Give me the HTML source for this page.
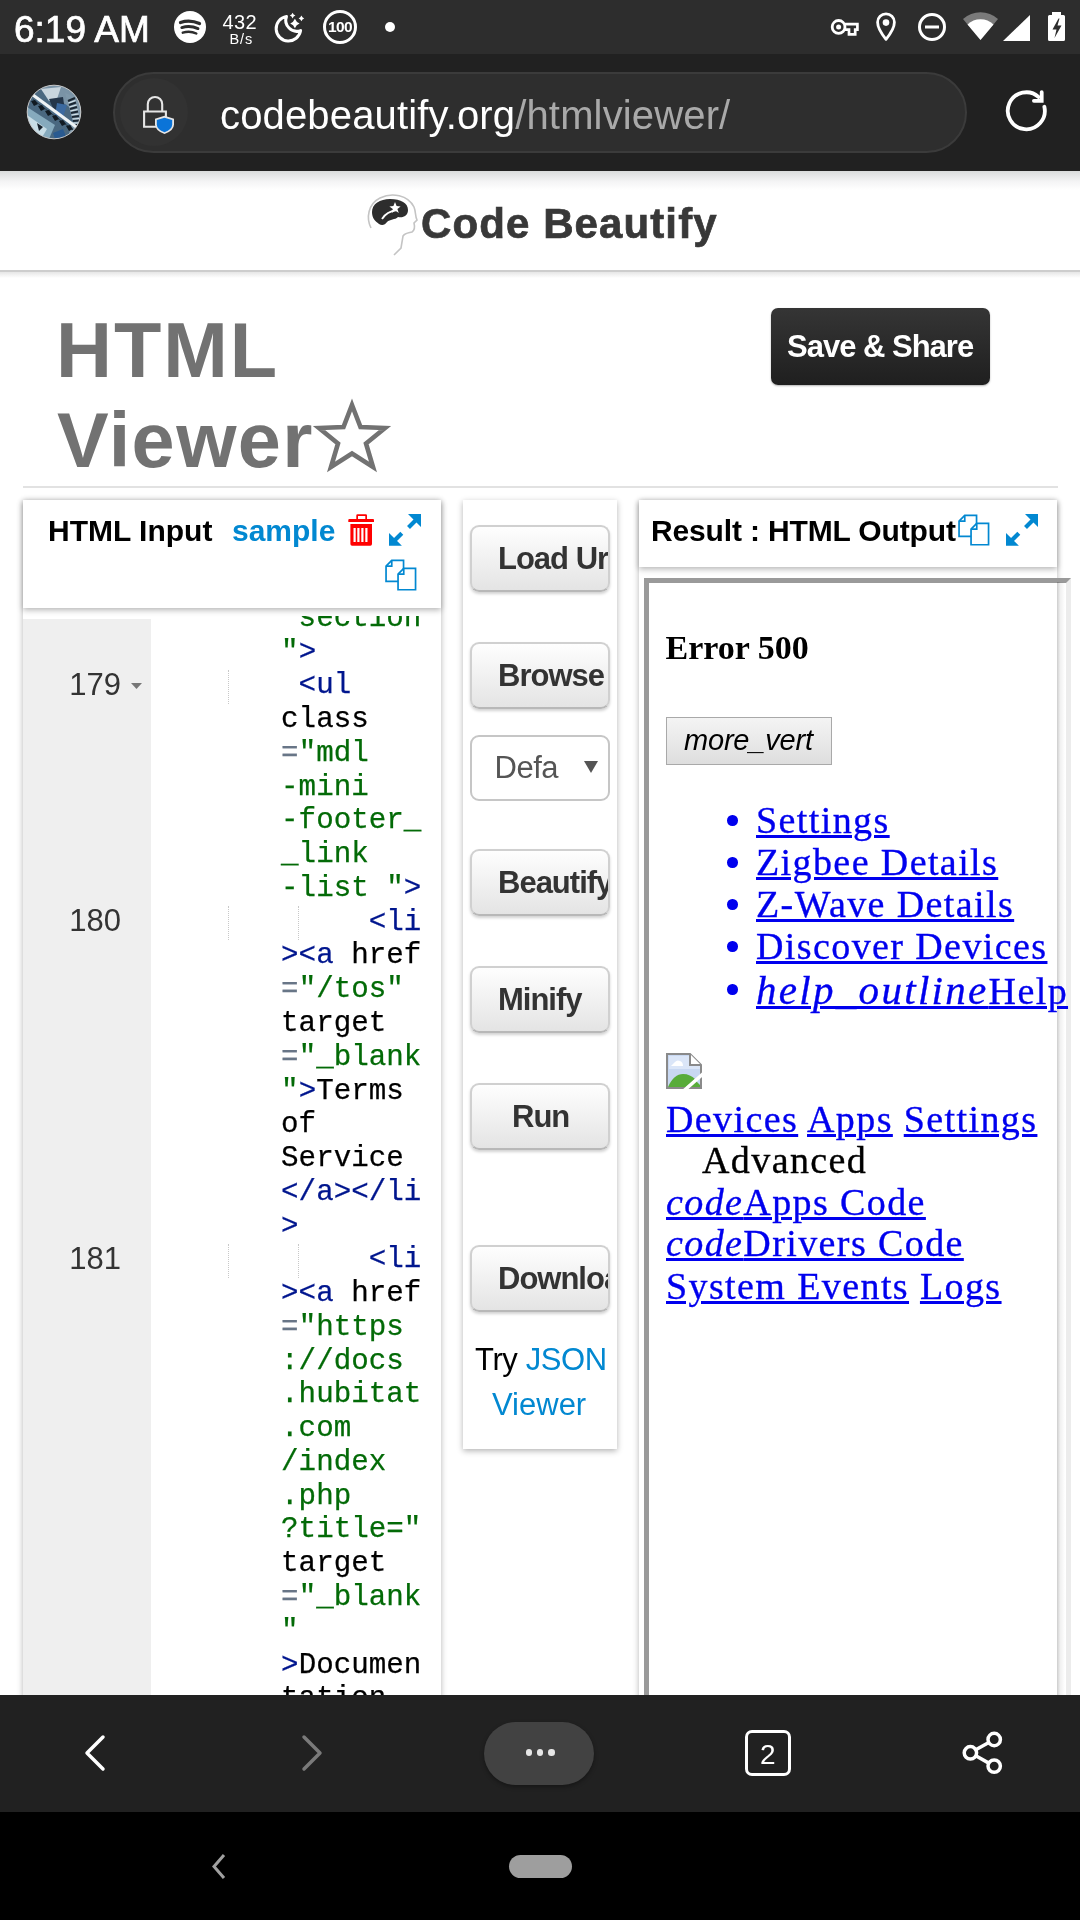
<!DOCTYPE html>
<html><head><meta charset="utf-8">
<style>
*{margin:0;padding:0;box-sizing:border-box}
html,body{width:1080px;height:1920px;overflow:hidden;background:#fff;font-family:"Liberation Sans",sans-serif}
body{position:relative}
.lay{position:absolute;left:0;top:0;width:1080px;height:1920px;will-change:transform}
.a{position:absolute}
.t{position:absolute;white-space:nowrap;line-height:1}
svg{position:absolute;overflow:visible}
.btn{position:absolute;left:469.5px;width:140px;height:67px;border:2px solid #d0d0d0;border-bottom-color:#b8b8b8;border-radius:9px;background:linear-gradient(#fefefe,#e4e4e4);box-shadow:0 2px 3px rgba(0,0,0,.18);overflow:hidden}
.btn span{position:absolute;left:26.5px;top:16.5px;font-weight:bold;font-size:31px;color:#333;white-space:nowrap;line-height:1;letter-spacing:-1px}
#code{position:absolute;left:158.5px;top:602.7px;font-family:"Liberation Mono",monospace;font-size:29.2px;line-height:33.76px;white-space:pre;color:#000;-webkit-text-stroke:0.25px currentColor}
.g{color:#036a07}.b{color:#00168e}.o{color:#687687}
.ln{position:absolute;font-size:31px;color:#333;line-height:1;text-align:right;width:60px;left:61px}
.guide{position:absolute;width:0;border-left:1px dotted #c8c8c8;height:34px}
.ifr{font-family:"Liberation Serif",serif;font-size:38px;letter-spacing:1.4px;color:#0000ee;-webkit-text-stroke:0.35px currentColor;white-space:nowrap;position:absolute;line-height:1}
.ifr u{text-decoration:underline;text-decoration-thickness:3px;text-underline-offset:2px}
.bul{position:absolute;left:727px;width:10.5px;height:10.5px;border-radius:50%;background:#0000ee}
</style></head><body><div class="lay">
<!-- ============ status bar ============ -->
<div class="a" style="left:0;top:0;width:1080px;height:54px;background:#2d2d2d"></div>
<div class="t" style="left:14px;top:11px;font-size:37px;color:#fff;-webkit-text-stroke:0.7px #fff">6:19 AM</div>
<svg style="left:174px;top:11px" width="32" height="32" viewBox="0 0 32 32">
  <circle cx="16" cy="16" r="16" fill="#fff"/>
  <path d="M6.5 11.5 Q16 8.3 25.5 12.6" stroke="#2d2d2d" stroke-width="3.3" fill="none" stroke-linecap="round"/>
  <path d="M7.8 16.6 Q16 14 24 17.6" stroke="#2d2d2d" stroke-width="2.9" fill="none" stroke-linecap="round"/>
  <path d="M8.8 21.6 Q16 19.3 22.3 22.5" stroke="#2d2d2d" stroke-width="2.5" fill="none" stroke-linecap="round"/>
</svg>
<div class="t" style="left:222.5px;top:11.5px;font-size:20px;color:#fff;letter-spacing:0.4px">432</div>
<div class="t" style="left:229.5px;top:31.5px;font-size:14.5px;color:#fff;letter-spacing:0.9px">B/s</div>
<svg style="left:268px;top:6px" width="44" height="42" viewBox="0 0 44 42">
  <path d="M18.5 10.5 A12.3 12.3 0 1 0 32.6 24.6 A11 11 0 0 1 18.5 10.5z" fill="none" stroke="#fff" stroke-width="3" stroke-linejoin="round"/>
  <path d="M26.9 12.8 Q28.215999999999998 16.184 31.599999999999998 17.5 Q28.215999999999998 18.816 26.9 22.2 Q25.584 18.816 22.2 17.5 Q25.584 16.184 26.9 12.8z M24.6 6.8 Q25.384 8.815999999999999 27.400000000000002 9.6 Q25.384 10.384 24.6 12.399999999999999 Q23.816000000000003 10.384 21.8 9.6 Q23.816000000000003 8.815999999999999 24.6 6.8z M33.4 9.600000000000001 Q34.184 11.616 36.199999999999996 12.4 Q34.184 13.184000000000001 33.4 15.2 Q32.616 13.184000000000001 30.599999999999998 12.4 Q32.616 11.616 33.4 9.600000000000001z" fill="#fff"/>
</svg>
<svg style="left:323px;top:10px" width="34" height="34" viewBox="0 0 34 34">
  <circle cx="17" cy="17" r="15.5" fill="none" stroke="#fff" stroke-width="3"/>
  <text x="17" y="22" font-family="Liberation Sans" font-weight="bold" font-size="15.5" fill="#fff" text-anchor="middle" letter-spacing="-0.6">100</text>
</svg>
<div class="a" style="left:385px;top:22px;width:10px;height:10px;border-radius:50%;background:#fff"></div>
<!-- right icons -->

<svg style="left:824px;top:8px" width="80" height="40" viewBox="0 0 80 40">
  <circle cx="14.6" cy="18.9" r="6.4" fill="none" stroke="#fff" stroke-width="2.8"/>
  <circle cx="14.6" cy="18.9" r="2.5" fill="#fff"/>
  <path d="M20.6 16.2 H33.4 V21.6 H31.2 V26.4 H25 V21.6 H20.6" fill="none" stroke="#fff" stroke-width="2.7"/>
  <path d="M62 31.3 C56 24 53.6 19.5 53.6 14.3 A8.4 8.4 0 0 1 70.4 14.3 C70.4 19.5 68 24 62 31.3z" fill="none" stroke="#fff" stroke-width="2.8" stroke-linejoin="round"/>
  <circle cx="62" cy="14.6" r="3.3" fill="#fff"/>
</svg>
<svg style="left:917px;top:13px" width="30" height="28" viewBox="0 0 30 28">
  <circle cx="15" cy="14" r="12.5" fill="none" stroke="#fff" stroke-width="3"/>
  <rect x="8" y="12.5" width="14" height="3" fill="#fff"/>
</svg>
<svg style="left:963px;top:13px" width="35" height="27" viewBox="0 0 35 27">
  <path d="M0 6 A26 26 0 0 1 35 6 L17.5 27z" fill="#7a7a7a"/>
  <path d="M4.5 11.5 A19 19 0 0 1 30.5 11.5 L17.5 27z" fill="#fff"/>
</svg>
<svg style="left:1003px;top:15px" width="27" height="26" viewBox="0 0 27 26">
  <path d="M27 0 V26 H0z" fill="#fff"/>
</svg>
<svg style="left:1048px;top:12px" width="17" height="29" viewBox="0 0 17 29">
  <path d="M4 0 H13 V3 H15.5 Q17 3 17 4.5 V27.5 Q17 29 15.5 29 H1.5 Q0 29 0 27.5 V4.5 Q0 3 1.5 3 H4z" fill="#fff"/>
  <path d="M10.5 6.5 L4.5 17.5 H8.5 L6.5 26 L13.5 13.5 H9.5 L11.5 6.5z" fill="#2d2d2d"/>
</svg>

<!-- ============ toolbar ============ -->
<div class="a" style="left:0;top:54px;width:1080px;height:117px;background:#212121"></div>
<svg style="left:27px;top:85px" width="54" height="54" viewBox="0 0 54 54">
  <defs><clipPath id="av"><circle cx="27" cy="27" r="26.8"/></clipPath></defs>
  <g clip-path="url(#av)">
    <rect width="54" height="54" fill="#4a6880"/>
    <path d="M0 0 H54 V30 L10 0z" fill="#7a93a6"/>
    <path d="M14 4 L34 2 L30 14 L22 16z" fill="#c9d6de"/>
    <path d="M22 14 L36 12 L38 26 L28 28z" fill="#24364a"/>
    <path d="M30 18 L40 20 L36 32 L28 30z" fill="#3c6aa0"/>
    <path d="M0 22 L28 40 L22 54 H0z" fill="#86aabd"/>
    <path d="M0 30 L20 44 L14 54 H0z" fill="#c8dde6"/>
    <path d="M38 8 L54 14 V54 H40 L46 36z" fill="#7f98aa"/>
    <g stroke="#1b2733" stroke-width="2.2">
      <path d="M41 16 L48 13 M42 20 L49 17.5 M43 24 L50 22 M44 28 L51 26.5 M45 32 L52 31 M46 36 L53 35.5 M47 40 L54 40"/>
    </g>
    <g stroke="#d8e6ec" stroke-width="1.2">
      <path d="M41.5 18 L48.5 15.5 M42.5 22 L49.5 20 M43.5 26 L50.5 24.5 M44.5 30 L51.5 29 M45.5 34 L52.5 33.5 M46.5 38 L53.5 38"/>
    </g>
    <path d="M6 10 L52 44" stroke="#eef3f5" stroke-width="3.2"/>
    <path d="M6 14.5 L50 48" stroke="#2a3a48" stroke-width="1"/>
    <g fill="#111a22">
      <path d="M4 16 l4 -1 3 4 -4 2z M11 21 l4 -1 3 4 -4 2z M18 26 l4 -1 3 4 -4 2z M25 31 l4 -1 3 4 -4 2z M32 36 l4 -1 3 4 -4 2z M39 41 l4 -1 3 4 -4 2z"/>
    </g>
    <path d="M26 48 L36 44 L40 54 H28z" fill="#2a5a90"/>
    <path d="M10 38 L16 42 L12 46z" fill="#18222c"/>
  </g>
  <circle cx="27" cy="27" r="26.8" fill="none" stroke="#c8c8c8" stroke-width="1"/>
</svg>
<div class="a" style="left:113px;top:72px;width:854px;height:81px;border-radius:41px;background:#2e2e2e;border:2px solid #3b3b3b"></div>
<div class="a" style="left:120px;top:78px;width:68px;height:68px;border-radius:50%;background:#323232"></div>
<svg style="left:143px;top:96px" width="32" height="38" viewBox="0 0 32 38">
  <path d="M4.8 15 V8.2 A7.2 7.2 0 0 1 19.2 8.2 V15" fill="none" stroke="#e6e6e6" stroke-width="2.1"/>
  <path d="M1.1 15.5 H22.9 V30.7 H1.1z" fill="none" stroke="#e6e6e6" stroke-width="2.1"/>
  <path d="M21.5 19.8 L31 22.8 V28.3 Q31 34.8 21.5 38 Q12 34.8 12 28.3 V22.8z" fill="#e6e6e6"/>
  <path d="M21.5 21.7 L29.2 24.1 V28.3 Q29.2 33.5 21.5 36.2 Q13.8 33.5 13.8 28.3 V24.1z" fill="#0b74d8"/>
</svg>
<div class="t" style="left:220px;top:95px;font-size:40px;color:#fff;letter-spacing:0.15px">codebeautify.org<span style="color:#a9a9a9">/htmlviewer/</span></div>
<svg style="left:1004px;top:89px" width="44" height="44" viewBox="0 0 44 44">
  <path d="M40.36 17.77 A18.5 18.5 0 1 1 34.68 8.05" fill="none" stroke="#fff" stroke-width="3.8" stroke-linecap="round"/>
  <path d="M37.7 3.2 V11.8 H29.9" fill="none" stroke="#fff" stroke-width="3.8" stroke-linecap="round" stroke-linejoin="miter"/>
</svg>

<!-- ============ page header ============ -->
<div class="a" style="left:0;top:171px;width:1080px;height:19px;background:linear-gradient(#dadcdc,#f4f4f5 55%,#fff)"></div>
<div class="a" style="left:0;top:270px;width:1080px;height:2px;background:#cdcdcd"></div>
<div class="a" style="left:0;top:272px;width:1080px;height:6px;background:linear-gradient(#e6e6e6,#fff)"></div>
<svg style="left:366px;top:192px" width="56" height="66" viewBox="0 0 56 66">
  <path d="M5 36 C0 26 2 12 14 6 C26 0 42 3 48 15 C50 20 49 24 51 28 L48 31 C49 35 49 38 46 40 C42 41 39 41 37 44 L35 56 L28 63" fill="none" stroke="#c4c4c4" stroke-width="1.6"/>
  <path d="M6 20 C6 12 14 7 24 7 C35 7 42 11 42 18 C42 24 37 26 32 25 C29 28 24 27 21 30 C19 33 16 34 13 32 C9 29 6 26 6 20z" fill="#2d2d2d"/>
  <path d="M16 27 C19 22 24 19 31 18" stroke="#fff" stroke-width="1.8" fill="none"/>
  <path d="M29 10 l1.6 4 4 0.6 -3.2 2.4 1.4 4 -3.6 -2.4 -3.4 2.4 1 -4 -3.4 -2.4 4 -0.6z" fill="#fff"/>
</svg>
<div class="t" style="left:421px;top:203px;font-size:42px;font-weight:bold;color:#383838;letter-spacing:1.1px;-webkit-text-stroke:0.7px #383838">Code Beautify</div>

<div class="t" style="left:56px;top:312px;font-size:77.5px;font-weight:bold;color:#727272;letter-spacing:2px">HTML</div>
<div class="t" style="left:57px;top:402px;font-size:77.5px;font-weight:bold;color:#727272;letter-spacing:1.4px">Viewer</div>
<svg style="left:314px;top:399px" width="76" height="74" viewBox="0 0 76 74">
  <path d="M38 6 L46.5 28 L71 29 L52 44.5 L59 68 L38 54.5 L17 68 L24 44.5 L5 29 L29.5 28z" fill="none" stroke="#727272" stroke-width="4.6" stroke-linejoin="miter" stroke-miterlimit="3"/>
</svg>

<div class="a" style="left:771px;top:308px;width:219px;height:77px;border-radius:7px;background:linear-gradient(#353535,#1f1f1f);box-shadow:0 1px 2px rgba(0,0,0,.3)"></div>
<div class="t" style="left:787px;top:331px;font-size:31px;font-weight:bold;color:#fff;letter-spacing:-1px">Save &amp; Share</div>

<div class="a" style="left:23px;top:486px;width:1035px;height:2px;background:#e2e2e2"></div>

<!-- ============ left panel ============ -->
<div class="a" style="left:23px;top:500px;width:418px;height:1300px;box-shadow:0 1px 6px rgba(0,0,0,.3);background:#fff"></div>
<div class="a" style="left:23px;top:619px;width:128px;height:1100px;background:#efefef"></div>
<div class="a" style="left:23px;top:600px;width:418px;height:1095px;overflow:hidden">
  <div class="guide" style="left:205px;top:70px"></div>
  <div class="guide" style="left:205px;top:306px"></div>
  <div class="guide" style="left:274.5px;top:306px"></div>
  <div class="guide" style="left:205px;top:644px"></div>
  <div class="guide" style="left:274.5px;top:644px"></div>
</div>
<div class="a" style="left:23px;top:616px;width:418px;height:1079px;overflow:hidden">
<div id="code" style="left:135.5px;top:-14.2px"><span class="g">        section</span>
<span class="g">       "</span><span class="b">&gt;</span>
<span class="b">        &lt;ul</span>
       class
       <span class="o">=</span><span class="g">"mdl</span>
<span class="g">       -mini</span>
<span class="g">       -footer_</span>
<span class="g">       _link</span>
<span class="g">       -list "</span><span class="b">&gt;</span>
<span class="b">            &lt;li</span>
<span class="b">       &gt;&lt;a</span> href
       <span class="o">=</span><span class="g">"/tos"</span>
       target
       <span class="o">=</span><span class="g">"_blank</span>
<span class="g">       "</span><span class="b">&gt;</span>Terms
       of
       Service
<span class="b">       &lt;/a&gt;&lt;/li</span>
<span class="b">       &gt;</span>
<span class="b">            &lt;li</span>
<span class="b">       &gt;&lt;a</span> href
       <span class="o">=</span><span class="g">"https</span>
<span class="g">       ://docs</span>
<span class="g">       .hubitat</span>
<span class="g">       .com</span>
<span class="g">       /index</span>
<span class="g">       .php</span>
<span class="g">       ?title="</span>
       target
       <span class="o">=</span><span class="g">"_blank</span>
<span class="g">       "</span>
<span class="b">       &gt;</span>Documen
       tation</div>
</div>
<div class="ln" style="top:668.5px">179</div>
<svg style="left:131px;top:683px" width="12" height="7" viewBox="0 0 12 7"><path d="M0 0 H11 L5.5 6z" fill="#777"/></svg>
<div class="ln" style="top:904.5px">180</div>
<div class="ln" style="top:1242.5px">181</div>

<div class="a" style="left:23px;top:500px;width:418px;height:108px;background:#fff;box-shadow:0 2px 6px rgba(0,0,0,.3)"></div>
<div class="t" style="left:48px;top:516px;font-size:30px;font-weight:bold;color:#000">HTML Input</div>
<div class="t" style="left:232px;top:516px;font-size:30px;font-weight:bold;color:#0288d1">sample</div>
<svg style="left:348px;top:513px" width="27" height="34" viewBox="0 0 27 34">
  <path d="M1.3 6 Q0.3 6 0.3 7 V9 H26 V7 Q26 6 25 6 H19 V2.5 Q19 1.3 17.8 1.3 H9.5 Q8.3 1.3 8.3 2.5 V6z M10 3 H17.3 V6 H10z" fill="#f00" fill-rule="evenodd"/>
  <path d="M2.4 11 H24 V31 Q24 32.7 22.3 32.7 H4.1 Q2.4 32.7 2.4 31z" fill="#f00"/>
  <path d="M6.6 15 V28.9 M10.4 15 V28.9 M14.4 15 V28.9 M18.4 15 V28.9" stroke="#fff" stroke-width="2.2"/>
</svg>
<svg style="left:389px;top:513px" width="33" height="33" viewBox="0 0 33 33">
  <path d="M19 1 H32 V14z M0 20 V32.7 H12.9z" fill="#0288d1"/>
  <path d="M28 6 L19.5 14.5 M4.5 28.5 L12.8 20.2" stroke="#0288d1" stroke-width="4.2"/>
</svg>
<svg style="left:384px;top:559px" width="34" height="33" viewBox="0 0 34 33">
  <path d="M2.05 7.15 L7.75 1.45 H19.55 V22.45 H2.05z" fill="#fff" stroke="#0288d1" stroke-width="1.7"/>
  <path d="M7.75 1.45 V7.15 H2.05" fill="none" stroke="#0288d1" stroke-width="1.7"/>
  <path d="M14.05 15.05 L19.75 9.35 H31.55 V30.75 H14.05z" fill="#fff" stroke="#0288d1" stroke-width="1.7"/>
  <path d="M19.75 9.35 V15.05 H14.05" fill="none" stroke="#0288d1" stroke-width="1.7"/>
</svg>

<!-- ============ middle panel ============ -->
<div class="a" style="left:463px;top:500px;width:154px;height:949px;background:#fff;box-shadow:0 2px 6px rgba(0,0,0,.3)"></div>
<div class="btn" style="top:524.5px"><span>Load Url</span></div>
<div class="btn" style="top:641.5px"><span>Browse</span></div>
<div class="a" style="left:469.5px;top:734.5px;width:140px;height:66px;border:2px solid #c6c6c6;border-radius:9px;background:#fff"></div>
<div class="t" style="left:494.5px;top:752px;font-size:31px;color:#555;letter-spacing:-0.5px">Defa</div>
<svg style="left:584px;top:761px" width="14" height="12" viewBox="0 0 14 12"><path d="M0 0 H14 L7 12z" fill="#555"/></svg>
<div class="btn" style="top:848.5px"><span>Beautify</span></div>
<div class="btn" style="top:965.5px"><span>Minify</span></div>
<div class="btn" style="top:1082.5px"><span style="left:40.5px">Run</span></div>
<div class="btn" style="top:1244.5px"><span>Download</span></div>
<div class="t" style="left:475px;top:1344px;font-size:31px;color:#000;letter-spacing:-0.4px">Try <span style="color:#0288d1">JSON</span></div>
<div class="t" style="left:492px;top:1389px;font-size:31px;color:#0288d1">Viewer</div>

<!-- ============ right panel ============ -->
<div class="a" style="left:639px;top:500px;width:418px;height:1300px;background:#fff;box-shadow:0 1px 6px rgba(0,0,0,.3)"></div>
<div class="a" style="left:644px;top:578px;width:427px;height:1200px;border-style:solid;border-width:5px;border-color:#9a9a9a #ececec #ececec #9a9a9a;background:#fff"></div>
<div class="a" style="left:1057px;top:582px;width:8px;height:1113px;background:linear-gradient(to right,rgba(0,0,0,.2),rgba(0,0,0,.06) 40%,rgba(0,0,0,0))"></div>
<div class="a" style="left:639px;top:500px;width:418px;height:67px;background:#fff;box-shadow:0 2px 6px rgba(0,0,0,.3)"></div>
<div class="t" style="left:651px;top:516px;font-size:30px;font-weight:bold;color:#000;letter-spacing:-0.15px">Result : HTML Output</div>
<svg style="left:957px;top:514px" width="34" height="33" viewBox="0 0 34 33">
  <path d="M2.05 7.15 L7.75 1.45 H19.55 V22.45 H2.05z" fill="#fff" stroke="#0288d1" stroke-width="1.7"/>
  <path d="M7.75 1.45 V7.15 H2.05" fill="none" stroke="#0288d1" stroke-width="1.7"/>
  <path d="M14.05 15.05 L19.75 9.35 H31.55 V30.75 H14.05z" fill="#fff" stroke="#0288d1" stroke-width="1.7"/>
  <path d="M19.75 9.35 V15.05 H14.05" fill="none" stroke="#0288d1" stroke-width="1.7"/>
</svg>
<svg style="left:1006px;top:513px" width="33" height="33" viewBox="0 0 33 33">
  <path d="M19 1 H32 V14z M0 20 V32.7 H12.9z" fill="#0288d1"/>
  <path d="M28 6 L19.5 14.5 M4.5 28.5 L12.8 20.2" stroke="#0288d1" stroke-width="4.2"/>
</svg>

<div class="t" style="left:665.5px;top:631px;font-family:'Liberation Serif',serif;font-size:34px;font-weight:bold;color:#000">Error 500</div>
<div class="a" style="left:666px;top:717px;width:166px;height:48px;border:1px solid #a9a9a9;background:linear-gradient(#f4f4f4,#dedede)"></div>
<div class="t" style="left:684px;top:726px;font-size:29px;font-style:italic;color:#000;letter-spacing:-0.2px">more_vert</div>

<div class="bul" style="top:815.0px"></div>
<div class="ifr" style="left:756px;top:801px"><u>Settings</u></div>
<div class="bul" style="top:857.0px"></div>
<div class="ifr" style="left:756px;top:843px"><u>Zigbee Details</u></div>
<div class="bul" style="top:899.0px"></div>
<div class="ifr" style="left:756px;top:885px"><u>Z-Wave Details</u></div>
<div class="bul" style="top:941.0px"></div>
<div class="ifr" style="left:756px;top:927px"><u>Discover Devices</u></div>
<div class="bul" style="top:984.0px"></div>
<div class="ifr" style="left:756px;top:970px"><u><i style="font-size:41px;letter-spacing:2.3px">help_outline</i>Help</u></div>

<svg style="left:666px;top:1053px" width="37" height="37" viewBox="0 0 37 37">
  <path d="M1 1 H24 L35 12 V35 H1z" fill="#c8d8f2" stroke="#8a8a8a" stroke-width="2"/>
  <path d="M24 1 V12 H35" fill="#fff" stroke="#8a8a8a" stroke-width="2"/>
  <path d="M3 3 H23 V13 H34 V16 H3z" fill="#dbe6f8"/>
  <path d="M5 13 L9 9 Q11 6.5 14 8 Q17 9 17 13z" fill="#fff"/>
  <path d="M2 34 C6 25 11 21 17 21 C22 21 26 23 29 26 L20 34z" fill="#58ac3a"/>
  <path d="M23 34 L30 28 L34 32 V34z" fill="#58ac3a"/>
  <path d="M17 38.5 L38 20" stroke="#fff" stroke-width="3.6"/>
</svg>
<div class="ifr" style="left:666px;top:1100px"><u>Devices</u> <u>Apps</u> <u>Settings</u></div>
<div class="ifr" style="left:702px;top:1141px;color:#000">Advanced</div>
<div class="ifr" style="left:666px;top:1183px"><u><i>code</i>Apps Code</u></div>
<div class="ifr" style="left:666px;top:1224px"><u><i>code</i>Drivers Code</u></div>
<div class="ifr" style="left:666px;top:1267px"><u>System Events</u> <u>Logs</u></div>

<!-- ============ bottom nav ============ -->
<div class="a" style="left:0;top:1695px;width:1080px;height:117px;background:#212121"></div>
<svg style="left:84px;top:1735px" width="22" height="36" viewBox="0 0 22 36"><path d="M19 2 L3 18 L19 34" fill="none" stroke="#fff" stroke-width="3.5" stroke-linecap="round" stroke-linejoin="round"/></svg>
<svg style="left:301px;top:1735px" width="22" height="36" viewBox="0 0 22 36"><path d="M3 2 L19 18 L3 34" fill="none" stroke="#7a7a7a" stroke-width="3.5" stroke-linecap="round" stroke-linejoin="round"/></svg>
<div class="a" style="left:484px;top:1722px;width:110px;height:63px;border-radius:32px;background:#424242;box-shadow:0 2px 4px rgba(0,0,0,.35)"></div>
<div class="a" style="left:525.5px;top:1749px;width:6.5px;height:6.5px;border-radius:50%;background:#e6e6e6"></div>
<div class="a" style="left:536.8px;top:1749px;width:6.5px;height:6.5px;border-radius:50%;background:#e6e6e6"></div>
<div class="a" style="left:548.1px;top:1749px;width:6.5px;height:6.5px;border-radius:50%;background:#e6e6e6"></div>
<div class="a" style="left:745px;top:1730px;width:46px;height:46px;border:3.5px solid #fff;border-radius:7px"></div>
<div class="t" style="left:760px;top:1741px;font-size:28px;color:#fff">2</div>
<svg style="left:961px;top:1731px" width="43" height="45" viewBox="0 0 43 45">
  <circle cx="33.2" cy="8.5" r="6.2" fill="none" stroke="#fff" stroke-width="3.5"/>
  <circle cx="9.4" cy="21.8" r="6.2" fill="none" stroke="#fff" stroke-width="3.5"/>
  <circle cx="33.2" cy="35.1" r="6.2" fill="none" stroke="#fff" stroke-width="3.5"/>
  <path d="M14.8 18.8 L27.8 11.5 M14.8 24.8 L27.8 32.1" stroke="#fff" stroke-width="3.5"/>
</svg>
<div class="a" style="left:0;top:1812px;width:1080px;height:108px;background:#000"></div>
<svg style="left:210px;top:1853px" width="18" height="27" viewBox="0 0 18 27"><path d="M14 2 L4 13.5 L14 25" fill="none" stroke="#a0a0a0" stroke-width="3"/></svg>
<div class="a" style="left:509px;top:1855px;width:63px;height:23px;border-radius:12px;background:#9e9e9e"></div>
</div></body></html>
